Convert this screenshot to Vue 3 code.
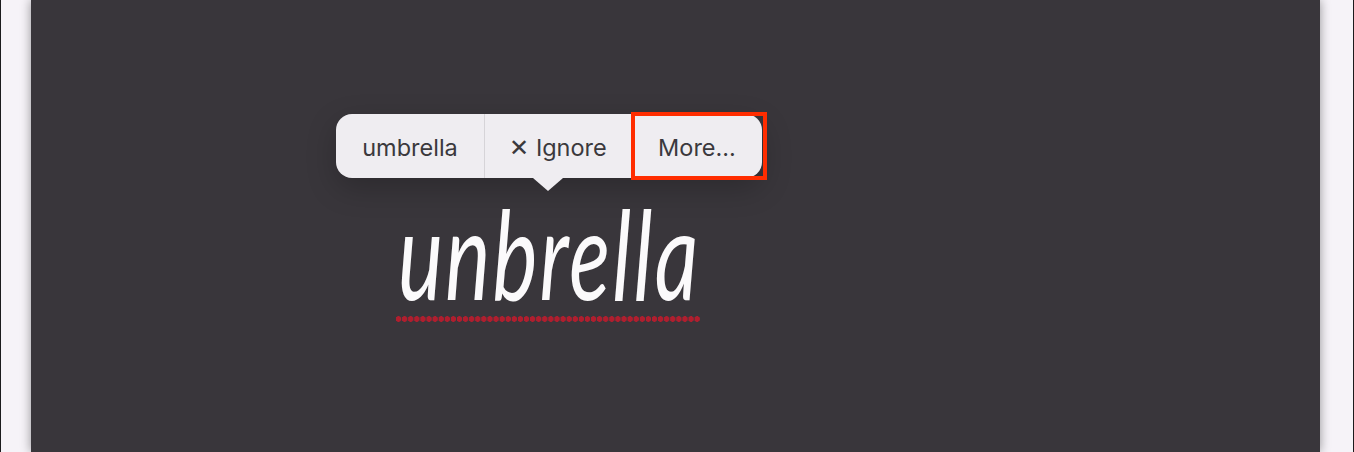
<script setup>
const items = [
  { label: 'umbrella', width: 149 },
  { label: '✕ Ignore', width: 147 },
  { label: 'More...', width: 130, marked: true }
]
</script>

<template>
  <main class="page">
    <section class="panel">
      <div class="stack">
        <div class="popover">
          <button
            v-for="item in items"
            :key="item.label"
            class="action"
            :class="{ marked: item.marked }"
            :style="{ width: item.width + 'px' }"
          >{{ item.label }}</button>
        </div>
        <div class="ink-wrap">
          <div class="ink">unbrella</div>
          <div class="squiggle"></div>
        </div>
      </div>
    </section>
  </main>
</template>

<style>
html, body { margin: 0; background: #f6f3f8; overflow: hidden; }
</style>

<style scoped>
.page {
  box-sizing: border-box;
  width: 1354px;
  height: 452px;
  background: #f6f3f8;
  border-left: 1px solid #1c1b1d;
  border-right: 1px solid #1c1b1d;
  padding-left: 30px;
  padding-right: 33px;
  overflow: hidden;
}
.panel {
  box-sizing: border-box;
  height: 452px;
  padding: 114px 0 0 305px;
  background: #39363b;
  box-shadow: 0 0 10px rgba(0, 0, 0, 0.4);
}
.stack {
  display: flex;
  flex-direction: column;
  align-items: flex-start;
  width: 440px;
}
.popover {
  position: relative;
  display: flex;
  height: 64px;
  border-radius: 16px;
  background: #efedf1;
  box-shadow: 0 10px 30px rgba(0, 0, 0, 0.22);
}
.popover::after {
  content: '';
  position: absolute;
  left: 197px;
  top: 64px;
  border-left: 15px solid transparent;
  border-right: 15px solid transparent;
  border-top: 13px solid #efedf1;
}
.action {
  position: relative;
  box-sizing: border-box;
  height: 64px;
  padding: 2px 0 0;
  border: 0;
  border-right: 1px solid #d6d4d8;
  background: transparent;
  color: #3b393d;
  font: 400 23.5px "Inter", "Liberation Sans", sans-serif;
}
.action.marked { border-right: 0; }
.action.marked::after {
  content: '';
  position: absolute;
  left: -1px;
  top: -2px;
  right: -5px;
  bottom: -2px;
  border: 4px solid #ff2d00;
}
.ink-wrap {
  margin: 35px 0 0 62px;
  width: 302px;
}
.ink {
  color: #fbfafb;
  font: italic 400 85px/100px "Lato", "Liberation Sans", sans-serif;
  letter-spacing: 2.2px;
  white-space: nowrap;
  transform: scaleY(1.46);
  transform-origin: left 75px;
}
.squiggle {
  height: 6px;
  margin: 3px 0 0 -2px;
  background-image: radial-gradient(circle at 2.5px 3px, #b01e2e 2.6px, transparent 3px);
  background-size: 6.1px 6px;
  background-repeat: repeat-x;
}
</style>
